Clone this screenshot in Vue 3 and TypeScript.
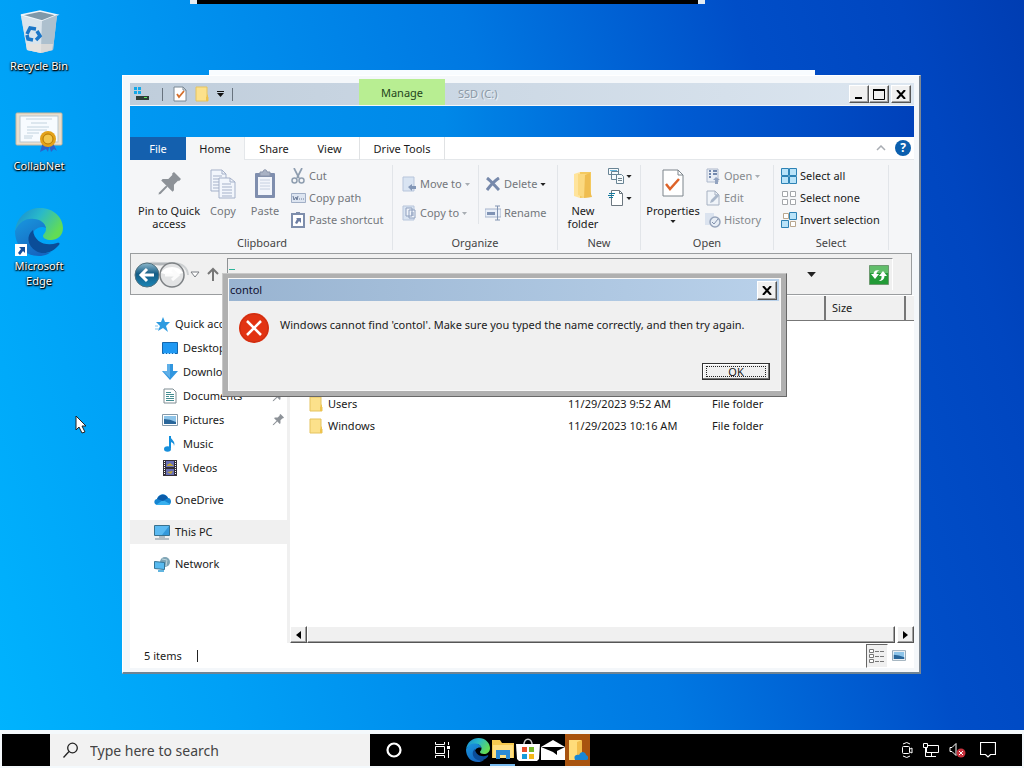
<script setup lang="ts">
import { h, ref } from 'vue'

const icons: Record<string, [number, number, string]> = {
  bin: [44, 44, '<path d="M4 5l19-4 17 4-4 35-12 3-14-3z" fill="#c3d3df"/><path d="M4 5l19-4 17 4-15 6z" fill="#7f98a9" stroke="#eef5fa" stroke-width="1.5"/><path d="M4 6l21 5-1 32-14-3z" fill="#d9e4ec"/><path d="M25 11l15-6-4 35-12 3z" fill="#adc0ce"/><path d="M9 34l27 0-1 6-11 3-14-3z" fill="#e9e2dc" opacity=".7"/><g fill="none" stroke="#1976c8" stroke-width="3.5"><path d="M10 24l3-6 6 1"/><path d="M20 21l3 5-4 4"/><path d="M16 30l-5-1-1-4"/></g>'],
  cert: [48, 42, '<rect x="1" y="2" width="46" height="32" rx="1" fill="#e9dfcf" stroke="#c8b79d"/><rect x="5" y="5" width="38" height="26" fill="#f7fbff" stroke="#b9c6ce"/><g stroke="#c2d3df"><path d="M11 8h26M16 12h16M12 16h22M12 19h20M12 22h12M9 25h9M9 27h8"/></g><path d="M28 31l-3 10 6-3 2 3 2-9M33 31l3 10 3-3 3 2-5-10" fill="#2f62c9"/><circle cx="33" cy="28" r="8" fill="#e3a21a"/><circle cx="33" cy="28" r="5" fill="#f3c64a" stroke="#b77800"/>'],
  edge: [48, 48, '<defs><linearGradient id="eg" x1="0" y1="0" x2="1" y2=".5"><stop stop-color="#1686d1"/><stop offset=".5" stop-color="#29b9ca"/><stop offset="1" stop-color="#62dc55"/></linearGradient><linearGradient id="eb" x1="0" y1="0" x2=".6" y2="1"><stop stop-color="#1998df"/><stop offset="1" stop-color="#1565bf"/></linearGradient></defs><path d="M0 23C2 8 13 0 25 0c14 0 23 10 23 20 0 8-6 12-12 12-5 0-8-2-8-4 0-2 3-3 3-7 0-5-5-9-12-9C10 12 3 17 0 23z" fill="url(#eg)"/><path d="M0 23C5 12 13 10 19 11c6 0 11 4 12 9-6-3-14 2-14 9 0 10 9 18 19 15-4 3-8 4-12 4C9 48 0 37 0 23z" fill="url(#eb)"/><path d="M18 22c-7 5-6 16 3 21 7 4 16 2 22-5 3-3 1-4-1-3-11 4-23-1-24-13z" fill="#0b4d98"/>'],
  shortcut: [12, 12, '<path fill="#fff" d="M0 0h12v12H0z"/><path d="M4 3h6v6L8 7l-3 4-2-2 3-4z" fill="#164f9b"/>'],
  drive: [16, 14, '<g fill="#12a7e8"><path d="M1 0h3v3H1zM5 0h3v3H5zM1 4h3v3H1zM5 4h3v3H5z"/></g><path fill="#303c36" d="M3 9h13v4H3z"/><path fill="#5de85d" d="M11 10h3v1h-3z"/>'],
  doccheck: [14, 16, '<path d="M1 1h9l3 3v11H1z" fill="#fff" stroke="#7b8894"/><path d="M10 1v3h3" fill="none" stroke="#7b8894"/><path d="M4 8l2 3 5-6" fill="none" stroke="#d46f2c" stroke-width="1.8"/>'],
  folder: [14, 16, '<path d="M1 1h11v9l1 1v4H1z" fill="#fce18b" stroke="#e5c35e"/><path d="M13 8l-2 3v4h2z" fill="#eec34d"/>'],
  qat: [7, 6, '<path d="M0 0h7v1H0zM0 2h7L3.500 6z" fill="#111"/>'],
  down: [7, 4, '<path d="M0 0h7L3.5 4z" fill="currentColor"/>'],
  pin: [24, 24, '<g transform="rotate(45 12 12)" fill="#8d9298"><path d="M7 0h10v3h-1v6l4 4v2H4v-2l4-4V3H7z"/><path d="M11 15h2v10l-1 2-1-2z"/></g>'],
  copy: [26, 30, '<g fill="#f2f6fc" stroke="#a5b1c9"><path d="M1 1h11l4 4v17H1z"/><path d="M12 1v4h4M3 7h9M3 10h9M3 13h9M3 16h9M3 19h9" fill="none"/><path d="M9 9h11l5 4v16H9z"/><path d="M20 9v4h5M12 15h9M12 18h10M12 21h10M12 24h10M12 27h10" fill="none"/></g>'],
  paste: [22, 30, '<rect x="1" y="4" width="20" height="25" rx="1" fill="#7f8eae"/><path fill="#f2f5fb" d="M4 8h14v18H4z"/><path d="M6 3h3c0-3 4-3 4 0h3v4H6z" fill="#a9b2c4" stroke="#8b95aa"/><path d="M6 11h10M6 14h10M6 17h10M6 20h10" stroke="#c6d0e0"/>'],
  cut: [14, 16, '<path d="M3 0l5 10M11 0L6 10" stroke="#8f9eb0" stroke-width="1.7"/><circle cx="3.5" cy="12.5" r="2.5" fill="none" stroke="#8f9eb0" stroke-width="1.5"/><circle cx="10.5" cy="12.5" r="2.5" fill="none" stroke="#8f9eb0" stroke-width="1.5"/>'],
  path: [15, 10, '<path d="M.5.5h14v9H.5z" fill="#dde5f1" stroke="#a1afc6"/><path d="M2 3l1 4 2-3 1 3 1-4M8 6h1M10 6h1M12 6h1" fill="none" stroke="#6a7b98"/>'],
  pshort: [14, 16, '<path d="M1 2h12v13H1z" fill="#fff" stroke="#7e8eac" stroke-width="2"/><path fill="#7e8eac" d="M5 0h4v3H5z"/><path d="M5 6h5v5L8 9l-2 3-2-1 2-4z" fill="#6c7da2"/>'],
  move: [14, 16, '<path d="M1 1h11v14H1z" fill="#d9e4f2" stroke="#b7c5db"/><path d="M6 11l4-3v2h4v3h-4v2z" fill="#8296b6"/>'],
  copyto: [14, 16, '<path d="M1 1h11v14H1z" fill="#d9e4f2" stroke="#b7c5db"/><path d="M4 3h6v8H4zM7 5h6v8H7z" fill="#eef3fa" stroke="#8fa0be"/><path d="M9 8h3M9 10h3" stroke="#8fa0be"/>'],
  del: [14, 14, '<path d="M1 1c4 3 8 8 12 12M13 1C8 4 4 9 1 13" stroke="#7789ab" stroke-width="3"/>'],
  rename: [16, 16, '<path d="M0 4h16v8H0z" fill="#e9eff8" stroke="#a6b4cc"/><path fill="#8093b4" d="M2 7h8v3H2z"/><path d="M10 1h5M10 15h5M12.500 1v14" stroke="#8294b2"/>'],
  newfolder: [20, 28, '<path d="M1 3l6-2v26l-6-2z" fill="#ffe49c"/><path d="M7 1h11v25l-11 1z" fill="#f4c95f"/><path d="M5 3h11v20l-6 3-5-2z" fill="#fbd980"/><path d="M12 4l5-2v18l2 6-8 1z" fill="#efbd50"/>'],
  newitem: [16, 16, '<g fill="#f7fbfd" stroke="#698495"><path d="M.500.500h10v6H.500zM3.500 3.500h7v8h-7z"/><path d="M8.500 6.500h5l2 2v7h-7z"/></g><path d="M2 2h7v1H2z" fill="#62b5dc"/><path d="M10 10.500h4M10 12.500h4" stroke="#71838d"/>'],
  easy: [16, 16, '<path d="M3.500.500h8l3 3v12h-11z" fill="#fff" stroke="#6c7780"/><path d="M11.500.500v3h3" fill="none" stroke="#6c7780"/><path d="M1 3.500h6M0 5.500h6M1 7.500h4" stroke="#147a9e"/>'],
  props: [22, 28, '<path d="M1 1h15l5 5v21H1z" fill="#fff" stroke="#7d858c"/><path d="M16 1v5h5" fill="none" stroke="#7d858c"/><path d="M4 15l4 5 9-10" fill="none" stroke="#de6329" stroke-width="2.5"/>'],
  open: [14, 16, '<path d="M1 1h11v13H1z" fill="#e8edf5" stroke="#aeb9cc"/><path d="M3 3h2M3 6h2M3 9h2M7 3h4M7 6h4" stroke="#7389ae" stroke-width="2"/><path d="M7 12l3-3 4 3h-2v4H9v-4z" fill="#92a3c0"/>'],
  edit: [14, 16, '<path d="M1 1h8l4 4v10H1z" fill="#f0f4f9" stroke="#a6b1c2"/><path d="M9 1v4h4" fill="none" stroke="#a6b1c2"/><path d="M4 13l1-3 6-6 2 2-6 6z" fill="#aab7ca"/>'],
  history: [16, 16, '<path d="M0 1h9v12H0z" fill="#dbe3ef"/><circle cx="10" cy="10" r="5" fill="#e7edf5" stroke="#96a4bb" stroke-width="1.500"/><path d="M7 10l2 2 4-5" fill="none" stroke="#8191ad"/>'],
  selall: [16, 16, '<path d="M.5.500h7v7h-7zM8.500.500h7v7h-7zM.500 8.500h7v7h-7zM8.500 8.500h7v7h-7z" fill="#b9e3f9" stroke="#2d82b5"/>'],
  selnone: [16, 16, '<path d="M1.500 1.500h5v5h-5zM9.500 1.500h5v5h-5zM1.500 9.500h5v5h-5zM9.500 9.500h5v5h-5z" fill="#fff" stroke="#a3a6aa"/>'],
  selinv: [16, 16, '<path d="M2.500 1.500h5v5h-5zM9.500 9.500h5v5h-5z" fill="#fff" stroke="#b9a78f"/><path d="M8.500.500h7v7h-7zM.500 8.500h7v7h-7z" fill="#b9e3f9" stroke="#2d82b5"/>'],
  chevup: [10, 6, '<path d="M1 5l4-4 4 4" fill="none" stroke="#a9adb3" stroke-width="1.500"/>'],
  nav: [70, 30, '<defs><linearGradient id="nb" x1="0" y1="0" x2="0" y2="1"><stop stop-color="#8fb9cc"/><stop offset=".45" stop-color="#145c86"/><stop offset="1" stop-color="#1c86b6"/></linearGradient></defs><path d="M6 6q8-3 18-2h16q13 1 14 12" fill="none" stroke="#cdd0d2" stroke-width="2"/><path d="M14 4q12 5 24 0z" fill="#b4b8bb"/><circle cx="13" cy="16" r="12" fill="url(#nb)" stroke="#53727f"/><path d="M20 16H8M13 10l-6 6 6 6" fill="none" stroke="#fff" stroke-width="3"/><circle cx="38" cy="16" r="12" fill="#e3e4e5" stroke="#7d8184" stroke-width="1.500"/><path d="M27 14a12 10 0 0 1 22 0q-11 4-22 0z" fill="#fff"/><path d="M31 16h12M38 11l6 5-6 5" fill="none" stroke="#fbfbfb" stroke-width="3"/><path d="M57 13h8l-4 5z" fill="#fff" stroke="#7b7f84"/>'],
  up: [12, 14, '<path d="M6 14V3M1 7l5-5 5 5" fill="none" stroke="#777" stroke-width="2"/>'],
  refresh: [20, 20, '<path d="M.500.500h19v19H.500z" fill="#239b37" stroke="#6d9a70"/><path d="M1 1h18v7H1z" fill="#62be6b"/><path d="M2 9l4 5 4-5H7.500q0-3 3-3.500Q5 4 4.500 9zM10 11l4-5 4 5h-2.500q0 5-6 5 3.500-1 3-5z" fill="#fff"/>'],
  star: [15, 15, '<path d="M8 0l2 5 5 0-4 4 2 6-5-4-5 3 2-5-4-4h5z" fill="#2e9be0"/><path d="M0 12h4M0 9h3" stroke="#81c3ed"/>'],
  desktop: [16, 13, '<path d="M.500.500h15v11H.500z" fill="#2099f3" stroke="#1366ad"/><path d="M2 11.500h12" stroke="#8fd0ff" stroke-dasharray="2 1"/>'],
  dl: [16, 16, '<path d="M5 0h6v7h5l-8 9-8-9h5z" fill="#3196df"/><path d="M5 0h3v14L1 7h4z" fill="#60b0e8"/>'],
  doc: [14, 16, '<path d="M1 1h9l3 3v11H1z" fill="#fff" stroke="#7e8d93"/><path d="M3 4.500h5M3 6.500h8M3 8.500h3M7 8.500h4M3 10.500h8M3 12.500h8" stroke="#438d91"/>'],
  pic: [16, 12, '<path d="M.500.500h15v11H.500z" fill="#fff" stroke="#859aaa"/><path fill="#8dc4e9" d="M2 2h12v8H2z"/><path d="M2 5q6 0 12 3v2H2z" fill="#29669a"/>'],
  music: [12, 16, '<path d="M6 0v12" stroke="#0f8fdf" stroke-width="2"/><ellipse cx="3.500" cy="13" rx="3.500" ry="2.800" fill="#178fdb"/><path d="M6 0c1 4 6 5 4 10 0-3-2-4-4-4z" fill="#178fdb"/>'],
  video: [14, 16, '<path d="M0 0h14v16H0z" fill="#343039"/><path d="M3 1h8v6H3zM3 9h8v6H3z" fill="#6970b6"/><path d="M4 5l3-2 4 3H4zM4 12l4 2 2-3z" fill="#c0a538"/><path d="M1.500 1v14M12.500 1v14" stroke="#fff" stroke-dasharray="1 1"/>'],
  cloud: [17, 12, '<path d="M3 11C-1 10 0 5 3 5c2-6 9-6 11-1 4 0 4 7 0 7z" fill="#1685d1"/><path d="M2 11l7-5 7 4-1 1z" fill="#38b0ef"/><path d="M3 5c3-6 9-5 11-1l-5 3z" fill="#0b5ba9"/>'],
  pc: [16, 15, '<path d="M.500.500h15v10H.500z" fill="#5bbaf2" stroke="#39718e"/><path d="M5 12h6M1 14h14" stroke="#788b97"/><path d="M15 1v9H8z" fill="#3499db"/>'],
  net: [16, 16, '<circle cx="11" cy="6" r="5" fill="#7ea4b5"/><path d="M8 3l5 1-1 6" fill="none" stroke="#bed6de"/><path d="M.500 5.500l10 1v7l-10-1z" fill="#58baf0" stroke="#337497"/><path d="M4 15h6" stroke="#62b5df" stroke-width="2"/>'],
  error: [30, 30, '<circle cx="15" cy="15" r="15" fill="#e23312"/><circle cx="15" cy="15" r="14" fill="none" stroke="#c92e13"/><path d="M8 8l14 14M22 8L8 22" stroke="#fff" stroke-width="2.500"/>'],
  x: [10, 9, '<path d="M1 0l8 9M9 0L1 9" stroke="#000" stroke-width="2"/>'],
  min: [10, 11, '<path d="M1 8h7v2H1z"/>'],
  max: [12, 11, '<path d="M.500 1h11v9.500H.500z" fill="none" stroke="#000"/><path d="M0 0h12v2H0z"/>'],
  left: [5, 8, '<path d="M5 0v8L0 4z"/>'],
  right: [5, 8, '<path d="M0 0v8l5-4z"/>'],
  details: [16, 14, '<path d="M.500.500h4v3h-4zM.500 5.500h4v3h-4zM.500 10.500h4v3h-4z" fill="#fff" stroke="#777"/><path d="M6 2.500h10M6 7.500h10M6 12.500h10" stroke="#777" stroke-dasharray="4 1"/>'],
  search: [18, 18, '<circle cx="10.500" cy="7" r="4.800" fill="none" stroke="#222" stroke-width="1.300"/><path d="M7 10.500l-5.500 6" stroke="#222" stroke-width="1.300"/>'],
  ring: [16, 16, '<circle cx="8" cy="8" r="6.500" fill="none" stroke="#fff" stroke-width="2.200"/>'],
  task: [18, 16, '<g stroke="#fff" fill="none"><path d="M2.500 4.500h9v7h-9z"/><path d="M2.500 0v2.500h9V0M2.500 16v-2.500h9V16M15.500 0v3M15.500 8v8"/></g><path d="M14 4h3v3h-3z" fill="#fff"/>'],
  explorer: [22, 20, '<path d="M0 1h8l2 3h12v15H0z" fill="#f6c94f"/><path d="M1 6h20v13H1z" fill="#ffdf82"/><path d="M4 11h14v9h-4v-4H8v4H4z" fill="#2d8ad4"/>'],
  store: [24, 24, '<path d="M8 8C7-1 17-1 16 8" fill="none" stroke="#ccc" stroke-width="1.500"/><path d="M0 6h24l-1 15-2 2H3l-2-2z" fill="#fff"/><path fill="#e84e2c" d="M6 9h5v5H6z"/><path fill="#77b82a" d="M13 9h5v5h-5z"/><path fill="#159ddb" d="M6 16h5v5H6z"/><path fill="#f5b81b" d="M13 16h5v5h-5z"/>'],
  mail: [24, 20, '<path d="M0 7l12-7 12 7v13H0z" fill="#fff"/><path d="M0 7h24l-8 4v4l-4-3z" fill="#000"/>'],
  files: [20, 24, '<path d="M1 2h12v20H1z" fill="#ffdc79"/><path d="M9 4l5-2v17H9z" fill="#f2bd4b"/><path d="M7 22c-2-5 2-6 4-5 2-5 7-3 7 0 3 1 3 5 0 5z" fill="#1787d5"/>'],
  meet: [12, 16, '<g fill="none" stroke="#fff"><rect x="1.500" y="4.500" width="7" height="7" rx="1"/><path d="M9 7l2-1v5l-2-1M2 2q4-3 7 0M2 14q4 3 7 0"/></g>'],
  lan: [16, 14, '<g fill="none" stroke="#fff"><path d="M5 2.500h10.500v7H3.500V5M8.500 10v3M5 13.500h8"/><path d="M.500.500h4v4h-4zM2.500 5v8.500h3"/></g>'],
  vol: [17, 16, '<path d="M1 5.500h2l4-4v12l-4-4H1z" fill="none" stroke="#fff"/><circle cx="12" cy="11" r="4.500" fill="#c8323e"/><path d="M10 9l4 4M14 9l-4 4" stroke="#fff"/>'],
  note: [16, 16, '<path d="M.500.500h15v12h-5L8 15l-2.500-2.500h-5z" fill="none" stroke="#fff" stroke-width="1.200"/>'],
  cursor: [12, 19, '<path d="M1 1v14l3-3 3 6 3-1-3-6h4z" fill="#fff" stroke="#222"/>'],
}

const Ic = (p: { n: string; w?: number }) => {
  const [w, hh, body] = icons[p.n]
  const width = p.w ?? w
  return h('svg', {
    class: 'ic', width, height: Math.round((hh * width) / w),
    viewBox: `0 0 ${w} ${hh}`, fill: '#000', 'aria-hidden': 'true', innerHTML: body,
  })
}
Ic.props = ['n', 'w']

const tabs = ['Home', 'Share', 'View', 'Drive Tools']
const shortcuts = [
  { icon: 'bin', name: 'Recycle Bin' },
  { icon: 'cert', name: 'CollabNet' },
  { icon: 'edge', name: 'Microsoft Edge' },
]
const quick = [
  { icon: 'desktop', name: 'Desktop', pinned: true },
  { icon: 'dl', name: 'Downloads', pinned: true },
  { icon: 'doc', name: 'Documents', pinned: true },
  { icon: 'pic', name: 'Pictures', pinned: true },
  { icon: 'music', name: 'Music' },
  { icon: 'video', name: 'Videos' },
]
const files = [
  { name: 'Users', date: '11/29/2023 9:52 AM' },
  { name: 'Windows', date: '11/29/2023 10:16 AM' },
]
const query = ref('')
</script>

<template>
  <div class="desktop">
    <div class="top-panel"></div>
    <nav class="shortcuts" aria-label="Desktop">
      <a v-for="s in shortcuts" :key="s.name" href="#" class="shortcut">
        <span class="pic"><Ic :n="s.icon" /><span v-if="s.icon === 'edge'" class="arrow"><Ic n="shortcut" /></span></span>
        <span>{{ s.name }}</span>
      </a>
    </nav>
    <div class="back-window"></div>

    <main class="window">
      <header class="titlebar">
        <div class="qat">
          <Ic n="drive" /><i></i>
          <button aria-label="Properties"><Ic n="doccheck" /></button>
          <button aria-label="New folder"><Ic n="folder" /></button>
          <button aria-label="Customize toolbar"><Ic n="qat" /></button><i></i>
        </div>
        <div class="manage">Manage</div>
        <div class="caption">SSD (C:)</div>
        <div class="sys">
          <button class="raised" aria-label="Minimize"><Ic n="min" /></button>
          <button class="raised" aria-label="Maximize"><Ic n="max" /></button>
          <button class="raised close" aria-label="Close"><Ic n="x" /></button>
        </div>
      </header>
      <div class="glass"></div>
      <nav class="tabs">
        <button class="file">File</button>
        <button v-for="t in tabs" :key="t" :class="t.split(' ')[0].toLowerCase()">{{ t }}</button>
        <div class="tab-end">
          <button aria-label="Collapse ribbon"><Ic n="chevup" /></button>
          <button class="help" aria-label="Help">?</button>
        </div>
      </nav>

      <section class="ribbon">
        <div class="group clipboard">
          <div class="tools">
            <button class="big wide"><Ic n="pin" />Pin to Quick access</button>
            <button class="big copy dim"><Ic n="copy" />Copy</button>
            <button class="big paste dim"><Ic n="paste" />Paste</button>
            <div class="stack dim">
              <button><span class="slot"><Ic n="cut" /></span>Cut</button>
              <button><span class="slot"><Ic n="path" /></span>Copy path</button>
              <button><span class="slot"><Ic n="pshort" /></span>Paste shortcut</button>
            </div>
          </div>
          <h2>Clipboard</h2>
        </div>
        <div class="group organize">
          <div class="tools">
            <div class="stack two dim">
              <button><span class="slot"><Ic n="move" /></span>Move to <Ic n="down" :w="5" class="soft" /></button>
              <button><span class="slot"><Ic n="copyto" /></span>Copy to <Ic n="down" :w="5" class="soft" /></button>
            </div>
            <div class="stack two dim ruled">
              <button><span class="slot"><Ic n="del" /></span>Delete <Ic n="down" :w="6" class="dark" /></button>
              <button><span class="slot"><Ic n="rename" /></span>Rename</button>
            </div>
          </div>
          <h2>Organize</h2>
        </div>
        <div class="group new">
          <div class="tools">
            <button class="big nf"><Ic n="newfolder" />New folder</button>
            <div class="stack">
              <button aria-label="New item"><Ic n="newitem" /><Ic n="down" :w="6" /></button>
              <button aria-label="Easy access"><Ic n="easy" /><Ic n="down" :w="6" /></button>
            </div>
          </div>
          <h2>New</h2>
        </div>
        <div class="group openg">
          <div class="tools">
            <button class="big prop"><Ic n="props" />Properties<Ic n="down" :w="6" /></button>
            <div class="stack dim faint">
              <button><span class="slot"><Ic n="open" /></span>Open <Ic n="down" :w="5" class="soft" /></button>
              <button><span class="slot"><Ic n="edit" /></span>Edit</button>
              <button><span class="slot"><Ic n="history" /></span>History</button>
            </div>
          </div>
          <h2>Open</h2>
        </div>
        <div class="group select">
          <div class="tools">
            <div class="stack">
              <button><span class="slot"><Ic n="selall" /></span>Select all</button>
              <button><span class="slot"><Ic n="selnone" /></span>Select none</button>
              <button><span class="slot"><Ic n="selinv" /></span>Invert selection</button>
            </div>
          </div>
          <h2>Select</h2>
        </div>
      </section>

      <section class="addressbar">
        <button class="history" aria-label="Back and forward"><Ic n="nav" /></button>
        <button aria-label="Up"><Ic n="up" /></button>
        <div class="address">
          <span class="mark"></span>
          <button class="drop" aria-label="Previous locations"><Ic n="down" :w="9" /></button>
          <button aria-label="Refresh"><Ic n="refresh" /></button>
        </div>
      </section>

      <div class="body">
        <nav class="tree" aria-label="Folders">
          <a href="#" class="qa"><span class="slot"><Ic n="star" /></span>Quick access</a>
          <a v-for="q in quick" :key="q.name" href="#" class="child">
            <span class="slot"><Ic :n="q.icon" /></span>{{ q.name }}
            <Ic v-if="q.pinned" n="pin" :w="12" class="pinned" />
          </a>
          <a href="#" class="root"><span class="slot"><Ic n="cloud" /></span>OneDrive</a>
          <a href="#" class="root on"><span class="slot"><Ic n="pc" /></span>This PC</a>
          <a href="#" class="root"><span class="slot"><Ic n="net" /></span>Network</a>
        </nav>
        <div class="pane">
          <table>
            <thead>
              <tr><th class="c1">Name</th><th class="c2">Date modified</th><th class="c3">Type</th><th class="c4">Size</th><th></th></tr>
            </thead>
            <tbody>
              <tr v-for="f in files" :key="f.name">
                <td class="name"><span><Ic n="folder" />{{ f.name }}</span></td><td>{{ f.date }}</td><td>File folder</td><td></td><td></td>
              </tr>
            </tbody>
          </table>
          <div class="scroll">
            <button class="raised" aria-label="Scroll left"><Ic n="left" /></button>
            <div class="thumb raised"></div>
            <button class="raised" aria-label="Scroll right"><Ic n="right" /></button>
          </div>
        </div>
      </div>
      <footer class="status">
        <span class="count">5 items</span>
        <button class="pressed" aria-label="Details view"><Ic n="details" /></button>
        <button class="large" aria-label="Thumbnail view"><Ic n="pic" :w="14" /></button>
      </footer>
    </main>

    <div class="dialog" role="dialog" aria-labelledby="dlg-title">
      <div class="dlg-in">
        <header><span id="dlg-title">contol</span><button class="raised" aria-label="Close"><Ic n="x" /></button></header>
        <div class="msg"><Ic n="error" /><p>Windows cannot find 'contol'. Make sure you typed the name correctly, and then try again.</p></div>
        <div class="act"><button class="ok"><span>OK</span></button></div>
      </div>
    </div>

    <div class="cursor"><Ic n="cursor" /></div>

    <footer class="taskbar">
      <button class="start" aria-label="Start"></button>
      <label class="search"><Ic n="search" /><input v-model="query" type="text" placeholder="Type here to search" aria-label="Type here to search" /></label>
      <button class="tk" aria-label="Cortana"><Ic n="ring" /></button>
      <button class="tk" aria-label="Task view"><Ic n="task" /></button>
      <div class="apps">
        <button aria-label="Edge"><Ic n="edge" :w="24" /></button>
        <button class="run" aria-label="File Explorer"><Ic n="explorer" /></button>
        <button aria-label="Store"><Ic n="store" /></button>
        <button aria-label="Mail"><Ic n="mail" /></button>
        <button class="hot" aria-label="OneDrive files"><Ic n="files" /></button>
      </div>
      <div class="tray">
        <button aria-label="Meet now"><Ic n="meet" /></button>
        <button aria-label="Network"><Ic n="lan" /></button>
        <button aria-label="Volume"><Ic n="vol" /></button>
        <button class="nt" aria-label="Notifications"><Ic n="note" /></button>
      </div>
    </footer>
  </div>
</template>

<style>
html, body { margin: 0; overflow: hidden; }
svg.ic { display: block; flex: none; }
</style>

<style scoped>
* { box-sizing: border-box; }
button { font: inherit; color: inherit; background: none; border: 0; padding: 0; margin: 0; display: flex; align-items: center; justify-content: center; white-space: nowrap; }
a { color: inherit; text-decoration: none; }
h2, p { margin: 0; font-size: inherit; font-weight: normal; }
.desktop { position: relative; height: 100vh; min-height: 700px; display: flex; flex-direction: column; overflow: hidden; font: 11px/16px "Noto Sans", sans-serif; color: #1a1a1a; background: linear-gradient(73deg, #00b4fe 0%, #00a0f6 20%, #0078e2 55%, #004ec8 77%, #0046c0 90%, #003db2 100%); }
.top-panel { position: absolute; left: 190px; right: 319px; top: 0; height: 4px; background: #000; border: solid #e4ecf2; border-width: 0 7px; }
.shortcuts { position: absolute; left: 0; top: 8px; width: 78px; display: grid; grid-template-rows: 100px 100px 100px; color: #fff; text-align: center; line-height: 15px; text-shadow: 1px 1px 1px #000, 0 1px 2px #000, 0 0 2px #123; }
.shortcut { display: flex; flex-direction: column; align-items: center; padding: 0 6px; }
.shortcut .pic { position: relative; height: 48px; margin-bottom: 2px; display: flex; align-items: center; }
.arrow { position: absolute; left: 0; bottom: 0; }
.back-window { position: absolute; left: 209px; right: 209px; top: 70px; height: 20px; background: #f8fcff; }

.window { position: absolute; left: 122px; right: 103px; top: 75px; bottom: 94px; background: #f4f7fa; border: 1px solid #fff; border-right: 2px solid #7c8894; border-bottom: 2px solid #6f8494; padding: 3px 5px 4px 7px; display: flex; flex-direction: column; }
.raised { background: #f0f0f0; border: 1px solid; border-color: #fff #555 #555 #fff; box-shadow: inset -1px -1px #a0a0a0; }
.titlebar { display: flex; height: 27px; flex: none; align-items: center; padding-top: 4px; background: linear-gradient(90deg, #bfcddb, #dce6f0) content-box; border-bottom: 1px solid #f4f7fa; }
.qat { width: 229px; display: flex; align-items: center; padding-left: 3px; }
.qat button { margin-right: 8px; }
.qat i { width: 1px; height: 13px; background: #68737e; margin: 0 10px 0 13px; }
.qat i:last-child { margin: 0; }
.manage { width: 86px; height: 26px; align-self: flex-end; margin-top: -4px; background: #b8ee92; text-align: center; line-height: 28px; color: #24451b; }
.caption { flex: 1; padding-left: 13px; color: #8b98a5; text-shadow: 1px 1px #eef3f7; }
.sys { display: flex; padding-right: 3px; }
.sys button { width: 20px; height: 18px; }
.sys .close { margin-left: 2px; }
.glass { height: 31px; flex: none; background: linear-gradient(90deg, #0098f2, #0088e8 40%, #005bd2 70%, #0041ba); }
.tabs { display: flex; height: 23px; flex: none; background: #fff; border-bottom: 1px solid #e4e7ea; }
.tabs > button { width: 58px; height: 23px; padding-top: 1px; }
.tabs .file { width: 56px; background: #1460ae; color: #fff; }
.tabs .home { width: 59px; background: #f5f6f7; border-right: 1px solid #e4e7ea; }
.tabs .view { width: 57px; padding-right: 3px; border-right: 1px solid #e0e2e4; }
.tabs .drive { width: 85px; border-right: 1px solid #e0e2e4; }
.tab-end { margin-left: auto; display: flex; align-items: center; gap: 9px; padding-right: 3px; }
.help { width: 16px; height: 16px; border-radius: 50%; background: #0b5fae; color: #fff; font-weight: bold; font-size: 12px; }

.ribbon { display: flex; flex: none; height: 93px; background: #f5f6f8; }
.group { display: flex; flex-direction: column; flex: none; border-right: 1px solid #e2e5e9; margin: 5px 0 3px; }
.group h2 { text-align: center; line-height: 16px; color: #444; height: 15px; margin-top: auto; }
.tools { display: flex; }
.clipboard { width: 263px; padding-left: 2px; } .organize { width: 165px; } .new { width: 83px; } .openg { width: 133px; } .select { width: 115px; }
.big { flex-direction: column; justify-content: flex-start; white-space: normal; line-height: 13px; height: 70px; padding-top: 4px; }
.big :deep(svg:first-child) { margin-bottom: 5px; }
.big.wide { width: 74px; padding-top: 7px; } .big.wide :deep(svg) { margin-bottom: 8px; }
.big.copy { width: 34px; } .big.paste { width: 50px; } .big.nf { width: 50px; padding-top: 6px; } .big.prop { width: 64px; } .big.prop :deep(svg:first-child) { margin-bottom: 7px; } .big.prop :deep(svg:last-child) { margin-top: 3px; }
.stack { display: flex; flex-direction: column; flex: none; align-items: flex-start; }
.stack button { height: 22px; gap: 3px; }
.stack.two { padding: 8px 0 0 8px; gap: 7px; width: 85px; }
.stack.two.ruled { border-left: 1px solid #e2e5e9; padding-left: 6px; width: 79px; }
.new .stack button { gap: 2px; }
.slot { width: 16px; display: flex; justify-content: center; flex: none; }
.dim { color: #73777c; } .faint { color: #85898e; }
.dark { color: #333; }
.select .stack { padding-left: 7px; }
.ic { color: #222; } .ic.soft { color: #a8adb3; }

.addressbar { flex: none; height: 42px; display: flex; align-items: center; gap: 8px; border: 1px solid #9a9d9f; background: #f0f0f0; margin-right: 2px; padding: 4px 18px 4px 3px; }
.history { width: 68px; justify-content: flex-start; }
.addressbar > button + button { margin-left: -3px; }
.address { flex: 1; display: flex; align-items: center; align-self: stretch; border-top: 1px solid #8e9194; border-left: 1px solid #8e9194; border-right: 1px solid #fff; padding: 0 3px 0 0; }
.mark { width: 6px; height: 1px; background: #2db59a; align-self: flex-start; margin: 10px auto 0 1px; }
.drop { margin-right: 53px; }

.body { display: flex; flex: 1; min-height: 0; background: #fff; }
.tree { width: 157px; flex: none; padding-top: 17px; overflow: hidden; }
.tree a { display: flex; align-items: center; gap: 5px; height: 24px; padding-left: 32px; position: relative; white-space: nowrap; }
.tree .qa, .tree .root { padding-left: 24px; }
.tree .root { margin-top: 8px; }
.tree .on { background: #f0f0f0; }
.pinned { position: absolute; right: 3px; top: 6px; }
.pane { flex: 1; min-width: 0; display: flex; flex-direction: column; border-left: 3px solid #f0f0f0; }
table { width: 100%; border-collapse: separate; border-spacing: 0; table-layout: fixed; margin-top: 1px; }
th { height: 25px; padding: 0 6px; text-align: left; font-weight: normal; background: #f0f0f0; border-right: 2px solid #777; border-bottom: 1px solid #777; }
th:last-child { border-right: 0; }
.c1 { width: 272px; } .c2 { width: 144px; } .c3 { width: 120px; } .c4 { width: 80px; }
tbody::before { content: ""; display: block; height: 72px; }
td { height: 22px; padding: 0 6px; white-space: nowrap; }
td.name { padding-left: 19px; } td.name span { display: flex; gap: 5px; align-items: center; }
.scroll { margin-top: auto; display: flex; height: 17px; }
.scroll button { width: 17px; } .thumb { flex: 1; margin-right: 2px; }
.status { flex: none; display: flex; height: 25px; background: #fff; align-items: center; padding-right: 8px; }
.count { margin-left: 14px; padding-right: 15px; border-right: 1px solid #222; line-height: 12px; margin-right: auto; }
.pressed { width: 22px; height: 24px; background: #f0f0f0; border: 1px solid; border-color: #666 #fff #fff #666; }
.large { margin-left: 4px; }

.dialog { position: absolute; left: 222px; right: 237px; top: 273px; background: #b0b0b0; border: 1px solid; border-color: #c8c8c8 #686868 #686868 #c8c8c8; padding: 4px 5px 5px; }
.dlg-in { background: #f0f0f0; border: 1px solid #f8f8f8; padding-bottom: 10px; }
.dlg-in header { display: flex; align-items: center; justify-content: space-between; height: 22px; background: linear-gradient(90deg, #99b4d1, #b9d1ea); margin-right: 1px; padding: 0 2px 0 1px; color: #101030; }
.dlg-in header button { width: 20px; height: 19px; }
.msg { display: flex; gap: 11px; padding: 12px 10px 0; } .msg p { padding-top: 4px; }
.act { display: flex; justify-content: flex-end; padding: 20px 10px 0; }
.ok { width: 68px; height: 17px; background: #f0f0f0; border: 1px solid #333; box-shadow: inset -1px -1px #777, inset 1px 1px #fff; padding: 2px 3px; }
.ok span { flex: 1; border: 1px dotted #222; line-height: 9px; }
.cursor { position: absolute; left: 75px; top: 415px; }

.taskbar { margin-top: auto; flex: none; display: flex; height: 38px; background: #000; border: solid #f4f9fc; border-width: 4px 2px 2px; color: #fff; }
.start { width: 48px; }
.search { width: 320px; display: flex; align-items: center; gap: 10px; padding-left: 12px; background: #f2f2f2; }
.search input { flex: 1; min-width: 0; border: 0; outline: 0; background: none; padding: 2px 0 0; font: 14px/20px "Noto Sans", sans-serif; }
.search input::placeholder { color: #444; opacity: 1; }
.tk { width: 48px; }
.apps { display: flex; margin-left: -1px; }
.apps button { width: 25px; }
.apps .run { border-bottom: 2px solid #76b9ed; }
.apps .hot { background: #a8530f; }
.tray { margin-left: auto; display: flex; gap: 10px; padding-right: 26px; }
.nt { margin-left: 4px; }
</style>
